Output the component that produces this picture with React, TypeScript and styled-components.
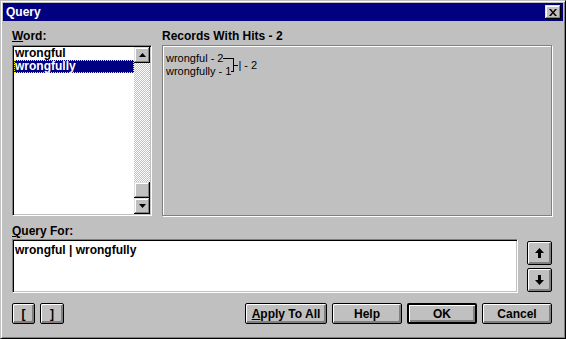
import React from 'react'
import styled, { createGlobalStyle, css } from 'styled-components'

const GlobalStyle = createGlobalStyle`
  html, body {
    margin: 0;
    padding: 0;
    background: #c0c0c0;
  }
  body {
    font-family: "Liberation Sans", Arial, sans-serif;
    -webkit-font-smoothing: none;
  }
  * { box-sizing: border-box; }
`

const Colors = {
  face: '#c0c0c0',
  light: '#dfdfdf',
  shadow: '#808080',
  dark: '#000000',
  white: '#ffffff',
  navy: '#000080',
}

const WORDS = ['wrongful', 'wrongfully']

const UpArrow = () => (
  <svg width="9" height="10" viewBox="0 0 9 10">
    <path d="M4.5 0 L9 5 L6 5 L6 10 L3 10 L3 5 L0 5 Z" fill="#000" />
  </svg>
)

const DownArrow = () => (
  <svg width="9" height="10" viewBox="0 0 9 10">
    <path d="M3 0 L6 0 L6 5 L9 5 L4.5 10 L0 5 L3 5 Z" fill="#000" />
  </svg>
)

const SmallTriangle = ({ down }: { down?: boolean }) => (
  <svg width="7" height="4" viewBox="0 0 7 4">
    <path d={down ? 'M0 0 L7 0 L3.5 4 Z' : 'M3.5 0 L7 4 L0 4 Z'} fill="#000" />
  </svg>
)

const CloseGlyph = () => (
  <svg width="8" height="7" viewBox="0 0 8 7">
    <path d="M0 0 L2 0 L4 2.5 L6 0 L8 0 L5 3.5 L8 7 L6 7 L4 4.5 L2 7 L0 7 L3 3.5 Z" fill="#000" />
  </svg>
)

export default function App() {
  return (
    <>
      <GlobalStyle />
      <Window>
        <TitleBar>
          <Title>Query</Title>
          <CloseButton><CloseGlyph /></CloseButton>
        </TitleBar>

        <Body>
          <TopRow>
            <Column>
              <Label><u>W</u>ord:</Label>
              <ListBox>
                <Items>
                  {WORDS.map((w, i) => (
                    <Item key={w} $selected={i === 1}>{w}</Item>
                  ))}
                </Items>
                <ScrollBar>
                  <ScrollButton><SmallTriangle /></ScrollButton>
                  <Thumb />
                  <ScrollButton><SmallTriangle down /></ScrollButton>
                </ScrollBar>
              </ListBox>
            </Column>

            <Column>
              <Label>Records With Hits - 2</Label>
              <HitsPanel>
                <Diagram>
                  <Terms>
                    <Term><span>wrongful - 2</span><Wire /></Term>
                    <Term><span>wrongfully - 1</span><Wire /></Term>
                  </Terms>
                  <Join><Stub /></Join>
                  <Result>| - 2</Result>
                </Diagram>
              </HitsPanel>
            </Column>
          </TopRow>

          <QuerySection>
            <Label><u>Q</u>uery For:</Label>
            <QueryRow>
              <QueryBox>wrongful | wrongfully</QueryBox>
              <ArrowColumn>
                <ArrowButton><UpArrow /></ArrowButton>
                <ArrowButton><DownArrow /></ArrowButton>
              </ArrowColumn>
            </QueryRow>
          </QuerySection>

          <ButtonRow>
            <ButtonGroup>
              <PushButton $width={23}>[</PushButton>
              <PushButton $width={24}>]</PushButton>
            </ButtonGroup>
            <ButtonGroup>
              <PushButton $width={82}><u>A</u>pply To All</PushButton>
              <PushButton $width={70}>Help</PushButton>
              <PushButton $width={70} $default>OK</PushButton>
              <PushButton $width={70}>Cancel</PushButton>
            </ButtonGroup>
          </ButtonRow>
        </Body>
      </Window>
    </>
  )
}

//#region Styled components
const raised = css`
  background: ${Colors.face};
  box-shadow:
    inset -1px -1px 0 ${Colors.dark},
    inset 1px 1px 0 ${Colors.light},
    inset -2px -2px 0 ${Colors.shadow},
    inset 2px 2px 0 ${Colors.white};
`

const sunken = css`
  border: 1px solid;
  border-color: ${Colors.shadow} ${Colors.white} ${Colors.white} ${Colors.shadow};
  box-shadow:
    inset 1px 1px 0 ${Colors.dark},
    inset -1px -1px 0 ${Colors.face};
`

const Window = styled.div`
  width: 566px;
  height: 339px;
  display: flex;
  flex-direction: column;
  padding: 2px;
  background: ${Colors.face};
  border: 1px solid;
  border-color: ${Colors.face} ${Colors.dark} ${Colors.dark} ${Colors.face};
  box-shadow:
    inset 1px 1px 0 ${Colors.white},
    inset -1px -1px 0 ${Colors.shadow};
`

const TitleBar = styled.div`
  height: 18px;
  display: flex;
  align-items: center;
  justify-content: space-between;
  padding: 0 2px 0 3px;
  background: ${Colors.navy};
`

const Title = styled.span`
  color: ${Colors.white};
  font-weight: bold;
  font-size: 12px;
`

const CloseButton = styled.div`
  ${raised};
  width: 16px;
  height: 14px;
  display: flex;
  align-items: center;
  justify-content: center;
  padding-right: 1px;
`

const Body = styled.div`
  flex: 1;
  display: flex;
  flex-direction: column;
  padding: 8px 11px 0 9px;
`

const TopRow = styled.div`
  display: grid;
  grid-template-columns: 140px 1fr;
  column-gap: 10px;
`

const Column = styled.div`
  display: flex;
  flex-direction: column;
  gap: 2px;
`

const Label = styled.div`
  height: 14px;
  line-height: 14px;
  font-size: 12px;
  font-weight: bold;
  color: #000;
  white-space: nowrap;
`

const ListBox = styled.div`
  ${sunken};
  height: 171px;
  display: flex;
  background: ${Colors.white};
  padding: 1px;
`

const Items = styled.div`
  flex: 1;
  display: flex;
  flex-direction: column;
`

const Item = styled.div<{ $selected?: boolean }>`
  height: 13px;
  line-height: 13px;
  padding-left: 1px;
  font-size: 12px;
  font-weight: bold;
  color: ${p => (p.$selected ? Colors.white : '#000')};
  background: ${p => (p.$selected ? Colors.navy : 'transparent')};
  outline: ${p => (p.$selected ? '1px dotted #ffff00' : 'none')};
  outline-offset: -1px;
`

const ScrollBar = styled.div`
  width: 16px;
  display: flex;
  flex-direction: column;
  background: repeating-conic-gradient(${Colors.white} 0 25%, ${Colors.face} 0 50%) 0 0 / 2px 2px;
`

const ScrollButton = styled.div`
  ${raised};
  width: 16px;
  height: 16px;
  display: flex;
  align-items: center;
  justify-content: center;
`

const Thumb = styled.div`
  ${raised};
  width: 16px;
  height: 16px;
  margin-top: auto;
`

const HitsPanel = styled.div`
  height: 171px;
  border: 1px solid ${Colors.shadow};
  box-shadow:
    1px 1px 0 ${Colors.white},
    inset 1px 1px 0 ${Colors.white};
  padding: 6px 3px;
`

const Diagram = styled.div`
  display: flex;
  width: max-content;
  align-items: stretch;
  font-size: 11px;
  line-height: 13px;
  color: #000;
`

const Terms = styled.div`
  display: flex;
  flex-direction: column;
`

const Term = styled.div`
  height: 13px;
  display: flex;
  align-items: center;
  white-space: nowrap;
`

const Wire = styled.span`
  flex: 1;
  min-width: 2px;
  height: 1px;
  background: #000;
`

const Join = styled.div`
  width: 5px;
  margin: 6px 0;
  display: flex;
  align-items: center;
  border-left: 1px solid #000;
`

const Stub = styled.span`
  width: 4px;
  height: 1px;
  background: #000;
`

const Result = styled.div`
  display: flex;
  align-items: center;
  white-space: pre;
`

const QuerySection = styled.div`
  margin-top: 8px;
  display: flex;
  flex-direction: column;
  gap: 1px;
`

const QueryRow = styled.div`
  display: flex;
  gap: 9px;
`

const QueryBox = styled.div`
  ${sunken};
  flex: 1;
  height: 54px;
  padding: 4px 2px;
  background: ${Colors.white};
  font-size: 12px;
  font-weight: bold;
  line-height: 13px;
`

const ArrowColumn = styled.div`
  width: 25px;
  display: flex;
  flex-direction: column;
  gap: 3px;
  padding-top: 2px;
`

const buttonFace = css`
  background: ${Colors.face};
  border: 1px solid #000;
  border-radius: 2px;
  box-shadow:
    inset 1px 1px 0 ${Colors.white},
    inset -1px -1px 0 ${Colors.shadow},
    inset -2px -2px 0 ${Colors.shadow};
`

const ArrowButton = styled.div`
  ${buttonFace};
  height: 24px;
  display: flex;
  align-items: center;
  justify-content: center;
`

const ButtonRow = styled.div`
  margin-top: 10px;
  display: flex;
  justify-content: space-between;
`

const ButtonGroup = styled.div`
  display: flex;
  gap: 5px;
`

const PushButton = styled.div<{ $width: number; $default?: boolean }>`
  ${buttonFace};
  width: ${p => p.$width}px;
  height: 21px;
  display: flex;
  align-items: center;
  justify-content: center;
  font-size: 12px;
  font-weight: bold;
  color: #000;
  ${p => p.$default && css`
    border-width: 2px;
  `}
`
//#endregion
